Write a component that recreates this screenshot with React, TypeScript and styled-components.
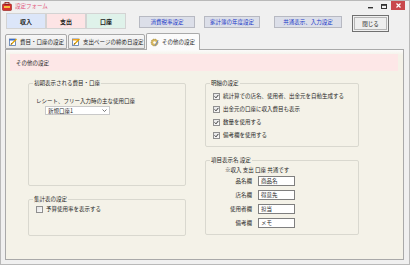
import styled, { createGlobalStyle } from "styled-components"

const GlobalStyle = createGlobalStyle`
  html, body {
    margin: 0;
    padding: 0;
    background: #f0f0f0;
  }
  body {
    font-family: "Noto Sans CJK JP", "Noto Sans", sans-serif;
    font-size: 5.5px;
    color: #1e1e1e;
  }
`

const Window = styled.div`
  width: 410px;
  height: 265px;
  box-sizing: border-box;
  border: 1px solid #b9b9b9;
  background: #f0f0f0;
  display: flex;
  flex-direction: column;
`

const TitleBar = styled.div`
  height: 11px;
  display: flex;
  align-items: center;
  padding-left: 1px;
  gap: 3px;
`

const Title = styled.span`
  color: #e2557a;
  font-size: 5.5px;
  line-height: 11px;
`

const WindowControls = styled.div`
  margin-left: auto;
  display: flex;
  align-items: flex-start;
  height: 11px;
`

const ControlGlyph = styled.div<{ $w: number }>`
  width: ${props => props.$w}px;
  height: 10px;
  display: flex;
  align-items: center;
  justify-content: center;
`

const CloseBox = styled.div`
  width: 14px;
  height: 9px;
  margin-right: 4px;
  background: #c9484c;
  display: flex;
  align-items: center;
  justify-content: center;
`

const TopRow = styled.div`
  height: 21px;
  display: flex;
  align-items: flex-start;
  padding-left: 5px;
`

const KindTab = styled.div<{ $bg: string }>`
  width: 40px;
  height: 16px;
  margin-top: 1px;
  box-sizing: border-box;
  background: ${props => props.$bg};
  border: 1px solid #d3d3d3;
  display: flex;
  align-items: center;
  justify-content: center;
  font-size: 6px;
  font-weight: 700;
  color: #222;
`

const SettingButton = styled.div<{ $w: number, $ml: number }>`
  width: ${props => props.$w}px;
  height: 12px;
  margin-top: 4px;
  margin-left: ${props => props.$ml}px;
  box-sizing: border-box;
  background: #dcdfe9;
  border: 1px solid #b7b9c2;
  color: #2038c8;
  display: flex;
  align-items: center;
  justify-content: center;
  white-space: nowrap;
`

const CloseButton = styled.div`
  width: 37px;
  height: 17px;
  margin-top: 3px;
  margin-left: 10px;
  box-sizing: border-box;
  border: 1px solid #707070;
  padding: 1px;
  display: flex;
`

const CloseButtonFace = styled.div`
  flex: 1;
  border: 1px solid #b5b5b5;
  background: #eeeeee;
  display: flex;
  align-items: center;
  justify-content: center;
  color: #111;
`

const TabStrip = styled.div`
  height: 16px;
  display: flex;
  align-items: flex-end;
  padding-left: 4px;
`

const Tab = styled.div<{ $active?: boolean, $w: number }>`
  width: ${props => props.$w}px;
  height: ${props => props.$active ? 17 : 15}px;
  margin-right: 1px;
  margin-bottom: ${props => props.$active ? -1 : 0}px;
  box-sizing: border-box;
  border: 1px solid #a9a9a9;
  border-bottom: ${props => props.$active ? "none" : "1px solid #a9a9a9"};
  border-radius: 2px 2px 0 0;
  background: ${props => props.$active ? "#fbfbfb" : "linear-gradient(#f7f7f7, #e9e9e9)"};
  display: flex;
  align-items: center;
  gap: 3px;
  padding-left: 3px;
  white-space: nowrap;
  overflow: hidden;
  position: relative;
  z-index: ${props => props.$active ? 2 : 1};
`

const Panel = styled.div`
  flex: 1;
  margin: 0 5px 4px 4px;
  border: 1px solid #a9a9a9;
  background: linear-gradient(#fbfbfb 0, #f4f2e8 5px);
  padding: 4px 4px 0 4px;
  display: flex;
  flex-direction: column;
`

const Band = styled.div`
  height: 17px;
  background: #fde7e7;
  padding-left: 6px;
  display: flex;
  align-items: center;
  margin-right: 1px;
`

const Columns = styled.div`
  display: flex;
  gap: 19px;
  margin-top: 8px;
  margin-left: 18px;
`

const Column = styled.div<{ $w: number }>`
  width: ${props => props.$w}px;
  display: flex;
  flex-direction: column;
  gap: 9px;
`

const Group = styled.fieldset<{ $h: number }>`
  margin: 0;
  height: ${props => props.$h}px;
  box-sizing: border-box;
  border: 1px solid #d9d8cf;
  border-radius: 2px;
  padding: 0 0 0 7px;
  display: flex;
  flex-direction: column;
`

const Legend = styled.legend`
  font-size: 5.5px;
  line-height: 8px;
  padding: 0 1px;
  margin-left: -3px;
`

const Line = styled.div<{ $indent?: number, $mt?: number }>`
  margin-left: ${props => props.$indent ?? 0}px;
  margin-top: ${props => props.$mt ?? 0}px;
  line-height: 8px;
`

const Select = styled.div`
  width: 65px;
  height: 9px;
  margin: 1px 0 0 9px;
  box-sizing: border-box;
  background: #fff;
  border: 1px solid #c9c9c9;
  display: flex;
  align-items: center;
  padding: 0 2px;
  justify-content: space-between;
`

const CheckRow = styled.div<{ $mt: number }>`
  display: flex;
  align-items: center;
  gap: 3px;
  margin-top: ${props => props.$mt}px;
  line-height: 8px;
`

const Box = styled.span`
  width: 7px;
  height: 7px;
  box-sizing: border-box;
  border: 1px solid #8f8f8f;
  background: linear-gradient(135deg, #e4e4e4, #fafafa);
  display: flex;
  align-items: center;
  justify-content: center;
`

const NameRow = styled.div`
  display: grid;
  grid-template-columns: 39px 37px;
  gap: 6px;
  align-items: center;
  height: 10px;
  margin-bottom: 4px;
`

const NameLabel = styled.span`
  text-align: right;
`

const NameInput = styled.div`
  height: 10px;
  box-sizing: border-box;
  background: #fff;
  border: 1px solid #7f7f7f;
  padding-left: 2px;
  line-height: 8px;
`

function Check ({ checked, label, mt }: { checked: boolean, label: string, mt: number }): JSX.Element {
  return (
    <CheckRow $mt={mt}>
      <Box>
        {checked && (
          <svg width="5" height="5" viewBox="0 0 5 5">
            <path d="M0.6 2.4 L2 3.8 L4.4 0.9" fill="none" stroke="#333" strokeWidth="1" />
          </svg>
        )}
      </Box>
      <span>{label}</span>
    </CheckRow>
  )
}

const NoteIcon = ({ yellow }: { yellow?: boolean }): JSX.Element => (
  <svg width="8" height="8" viewBox="0 0 8 8">
    <rect x="0.5" y="1" width="6" height="6.5" fill="#fff" stroke="#5577aa" strokeWidth="0.8" />
    <rect x="0.5" y="1" width="6" height="1.5" fill={yellow ? "#f0a020" : "#3a6cc8"} />
    <path d="M2 6.5 L7.5 1" stroke="#e0a000" strokeWidth="1.3" />
    <path d="M2 6.5 L2.6 5.4" stroke="#333" strokeWidth="0.8" />
  </svg>
)

const GearIcon = (): JSX.Element => (
  <svg width="9" height="9" viewBox="0 0 9 9">
    <circle cx="4.5" cy="4.5" r="3.4" fill="#d8b860" stroke="#8a7430" strokeWidth="0.6" strokeDasharray="1.2 0.8" />
    <circle cx="4.5" cy="4.5" r="1.3" fill="#fff" />
    <path d="M5 7.8 L8.2 2.5" stroke="#6688cc" strokeWidth="1" />
  </svg>
)

const AppIcon = (): JSX.Element => (
  <svg width="10" height="9" viewBox="0 0 10 9">
    <rect x="0.5" y="2" width="9" height="6.5" rx="1" fill="#d8322c" stroke="#8e1a16" strokeWidth="0.6" />
    <rect x="3" y="0.5" width="4" height="2" fill="none" stroke="#8e1a16" strokeWidth="0.8" />
    <rect x="2" y="4" width="6" height="2" fill="#f3c040" />
  </svg>
)

const names = [
  { label: "品名欄", value: "商品名" },
  { label: "店名欄", value: "得意先" },
  { label: "使用者欄", value: "担当" },
  { label: "備考欄", value: "メモ" }
]

export default function App (): JSX.Element {
  return (
    <>
      <GlobalStyle />
      <Window>
        <TitleBar>
          <AppIcon />
          <Title>設定フォーム</Title>
          <WindowControls>
            <ControlGlyph $w={14}>
              <svg width="5" height="5" viewBox="0 0 5 5"><rect x="0" y="3" width="5" height="1.4" fill="#333" /></svg>
            </ControlGlyph>
            <ControlGlyph $w={14}>
              <svg width="6" height="5" viewBox="0 0 6 5"><rect x="0.5" y="0.5" width="5" height="4" fill="none" stroke="#333" strokeWidth="1" /><rect x="0.5" y="0.5" width="5" height="1.3" fill="#333" /></svg>
            </ControlGlyph>
            <CloseBox>
              <svg width="5" height="5" viewBox="0 0 5 5"><path d="M0.5 0.5 L4.5 4.5 M4.5 0.5 L0.5 4.5" stroke="#fff" strokeWidth="1.2" /></svg>
            </CloseBox>
          </WindowControls>
        </TitleBar>

        <TopRow>
          <KindTab $bg="#dce6f9">収入</KindTab>
          <KindTab $bg="#fde4e5">支出</KindTab>
          <KindTab $bg="#dff2ea">口座</KindTab>
          <SettingButton $w={56} $ml={13}>消費税率設定</SettingButton>
          <SettingButton $w={56} $ml={9}>家計簿の年度設定</SettingButton>
          <SettingButton $w={68} $ml={14}>共通表示、入力設定</SettingButton>
          <CloseButton>
            <CloseButtonFace>閉じる</CloseButtonFace>
          </CloseButton>
        </TopRow>

        <TabStrip>
          <Tab $w={62}><NoteIcon />費目・口座の設定</Tab>
          <Tab $w={77}><NoteIcon yellow />支出ページの締め日設定</Tab>
          <Tab $w={54} $active><GearIcon />その他の設定</Tab>
        </TabStrip>

        <Panel>
          <Band>その他の設定</Band>
          <Columns>
            <Column $w={158}>
              <Group $h={107}>
                <Legend>初期表示される費目・口座</Legend>
                <Line $mt={10}>レシート、フリー入力時の主な使用口座</Line>
                <Select>
                  <span>新規口座1</span>
                  <svg width="5" height="3" viewBox="0 0 5 3"><path d="M0.5 0.5 L2.5 2.5 L4.5 0.5" fill="none" stroke="#555" strokeWidth="0.8" /></svg>
                </Select>
              </Group>
              <Group $h={41}>
                <Legend>集計表の設定</Legend>
                <Check checked={false} label="予算使用率を表示する" mt={2} />
              </Group>
            </Column>
            <Column $w={154}>
              <Group $h={68}>
                <Legend>明細の設定</Legend>
                <Check checked label="統計算での店名、使用者、出金元を自動生成する" mt={5} />
                <Check checked label="出金元の口座に収入費目も表示" mt={5} />
                <Check checked label="数量を使用する" mt={5} />
                <Check checked label="備考欄を使用する" mt={5} />
              </Group>
              <Group $h={79}>
                <Legend>項目表示名 設定</Legend>
                <Line $indent={12} $mt={2}>※収入 支出 口座 共通です</Line>
                <Line $mt={2}>
                  {names.map(n => (
                    <NameRow key={n.label}>
                      <NameLabel>{n.label}</NameLabel>
                      <NameInput>{n.value}</NameInput>
                    </NameRow>
                  ))}
                </Line>
              </Group>
            </Column>
          </Columns>
        </Panel>
      </Window>
    </>
  )
}
